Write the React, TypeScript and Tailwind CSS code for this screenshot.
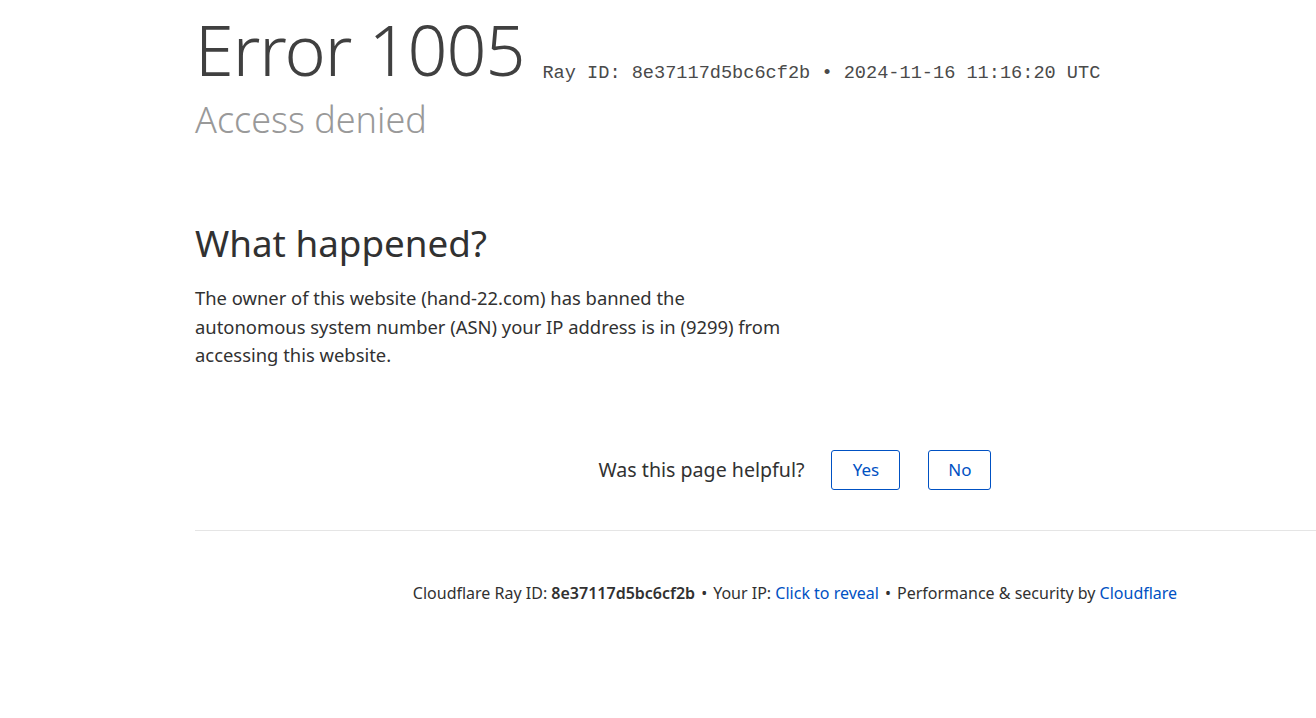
const ErrorPage = () => {
  return (
    <div className="w-full h-[718px] overflow-hidden bg-white text-[#404040] font-['Noto_Sans',sans-serif]">
      <div className="ml-[195px] w-[1200px]">
        {/* Header */}
        <div className="flex items-baseline pt-[11px]">
          <h1 className="text-[70px] font-light leading-[1.1] text-[#404040] tracking-[-1px]">Error 1005</h1>
          <span className="ml-[18px] translate-y-[2px] font-['Liberation_Mono',monospace] text-[18.6px] text-[#4a4a4a]">
            Ray ID: 8e37117d5bc6cf2b • 2024-11-16 11:16:20 UTC
          </span>
        </div>
        <h2 className="text-[36px] font-light leading-[1.2] text-[#999999] mt-[10px]">Access denied</h2>

        {/* Details */}
        <section className="mt-[80px] w-[600px]">
          <h2 className="text-[36.8px] font-normal leading-[1.2] text-[#313131]">What happened?</h2>
          <p className="mt-[19px] text-[18.4px] leading-[28.5px] text-[#313131]">
            The owner of this website (hand-22.com) has banned the autonomous system number (ASN) your IP address is in (9299) from accessing this website.
          </p>
        </section>

        {/* Feedback */}
        <div className="mt-[80px] flex items-center justify-center gap-[27px] text-[#313131]">
          <span className="text-[19.6px]">Was this page helpful?</span>
          <div className="flex gap-[28px]">
            <button className="w-[69px] h-[40px] rounded-[3px] border border-[#0051c3] text-[#0051c3] text-[17px]">Yes</button>
            <button className="w-[63px] h-[40px] rounded-[3px] border border-[#0051c3] text-[#0051c3] text-[17px]">No</button>
          </div>
        </div>

        {/* Footer */}
        <div className="mt-[40px] border-t border-[#e5e5e5] pt-[50px] text-center text-[16px] text-[#313131]">
          Cloudflare Ray ID: <strong className="font-semibold">8e37117d5bc6cf2b</strong>
          <span className="mx-[6px]">•</span>
          Your IP: <span className="text-[#0051c3]">Click to reveal</span>
          <span className="mx-[6px]">•</span>
          Performance &amp; security by <span className="text-[#0051c3]">Cloudflare</span>
        </div>
      </div>
    </div>
  );
};

export default function App() {
  return <ErrorPage />;
}
